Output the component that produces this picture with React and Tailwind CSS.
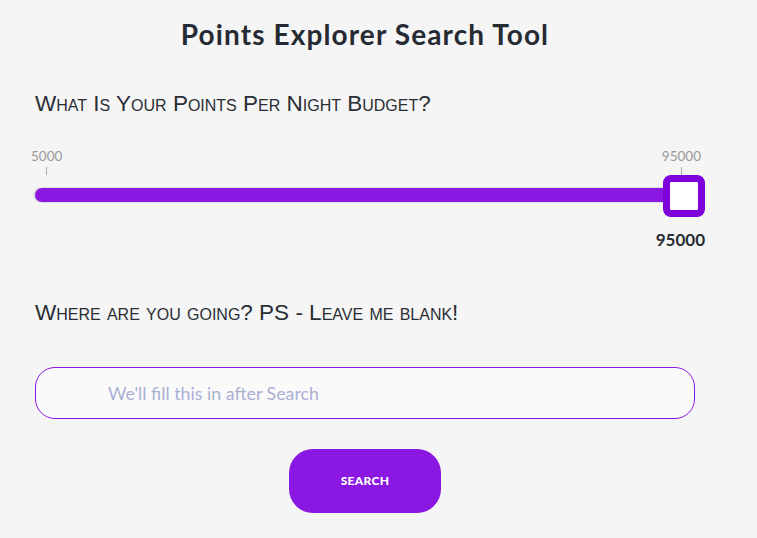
export default function App() {
  return (
    <div className="min-h-[538px] w-full bg-[#f5f5f5] font-['Lato',sans-serif]">
      <div className="ml-[35px] w-[660px] pt-[15px]">
        <h1 className="text-center text-[28px] leading-[38px] font-bold text-[#262a33] font-['Lato',sans-serif] tracking-[1.1px]">
          Points Explorer Search Tool
        </h1>
        <h2 className="mt-[37px] text-[22.5px] leading-[28px] text-[#2a2d34] font-['Liberation_Sans',sans-serif] [font-variant:small-caps]">
          What Is Your Points Per Night Budget?
        </h2>
        <div className="relative mt-[31px] h-[110px]">
          <div className="flex justify-between">
            <div className="flex flex-col items-center ml-[-4px]">
              <span className="text-[13.5px] leading-[14px] text-[#999] font-['Lato',sans-serif]">5000</span>
              <span className="mt-[4px] h-[8px] w-px bg-[#aaa]"></span>
            </div>
            <div className="flex flex-col items-center mr-[-6px]">
              <span className="text-[13.5px] leading-[14px] text-[#999] font-['Lato',sans-serif]">95000</span>
              <span className="mt-[4px] h-[8px] w-px bg-[#aaa]"></span>
            </div>
          </div>
          <div className="mt-[13px] h-[14px] w-[650px] rounded-full bg-[#8b17e2] shadow-[-1px_0_0_1px_#ddd]"></div>
          <div className="absolute left-[628px] top-[26px] h-[42px] w-[42px] rounded-[8px] border-[7px] border-[#7d00d8] bg-white"></div>
          <div className="absolute right-[-10px] top-[82px] text-[17px] font-bold leading-[18px] text-[#2a2d34]">95000</div>
        </div>
        <h2 className="mt-[40px] text-[22.5px] leading-[28px] text-[#2a2d34] font-['Liberation_Sans',sans-serif] [font-variant:small-caps]">
          Where are you going? PS - Leave me blank!
        </h2>
        <input
          type="text"
          placeholder="We'll fill this in after Search"
          className="mt-[40px] block h-[52px] w-[660px] rounded-[20px] border border-[#8b17e2] bg-[#fafafa] pl-[72px] text-[17.8px] text-[#333] outline-none placeholder:text-[#aab0d4] font-['Lato',sans-serif]"
        />
        <div className="mt-[30px] flex justify-center">
          <button className="h-[64px] w-[152px] rounded-[24px] bg-[#8b17e2] text-[12px] font-black tracking-[0.3px] text-white font-['Lato',sans-serif]">
            SEARCH
          </button>
        </div>
      </div>
    </div>
  );
}
